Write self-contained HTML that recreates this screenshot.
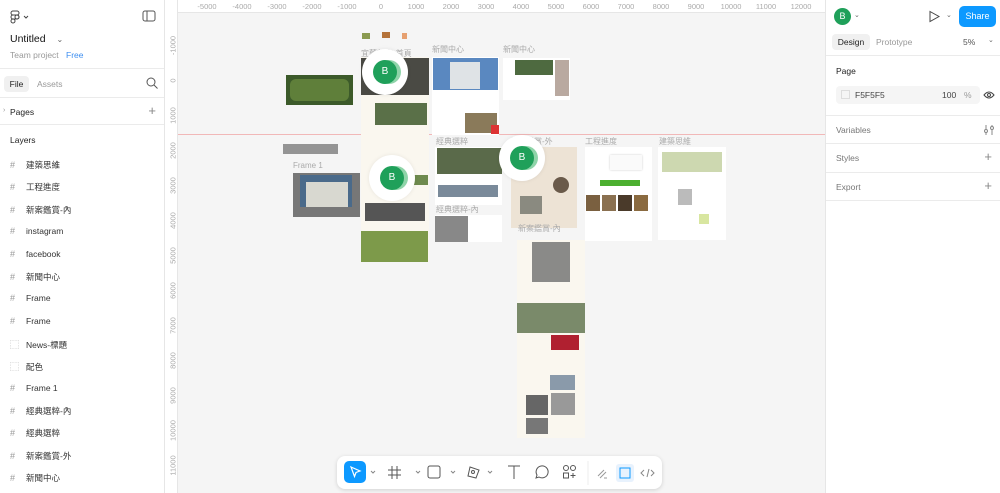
<!DOCTYPE html>
<html><head><meta charset="utf-8"><style>
*{box-sizing:border-box;margin:0;padding:0}
body{width:1000px;height:493px;overflow:hidden;background:#f5f5f5;font-family:"Liberation Sans","Noto Sans CJK TC",sans-serif;font-size:9px;color:#222;position:relative}
.a{position:absolute}
.left{left:0;top:0;width:165px;height:493px;background:#fff;border-right:1px solid #e6e6e6}
.right{left:825px;top:0;width:175px;height:493px;background:#fff;border-left:1px solid #e6e6e6}
.hr{position:absolute;left:0;right:0;height:1px;background:#ebebeb}
.layer{position:absolute;left:10px;font-size:8.5px;color:#333}
.layer b{font-weight:normal;color:#999;display:inline-block;width:16px;font-size:9px}
.rt{font-size:7.5px;color:#aaa;position:absolute;top:2px;transform:translateX(-50%)}
.rl{font-size:7.5px;color:#aaa;position:absolute;left:167px;transform:rotate(-90deg);transform-origin:center;width:30px;text-align:center;margin-left:-9px}
.lbl{position:absolute;font-size:8px;color:#aaa}
.fr{position:absolute;background:#faf7ef}
.av{position:absolute;width:46px;height:46px;border-radius:50%;background:#fff;box-shadow:0 0 4px rgba(0,0,0,.08)}
.av i{position:absolute;left:11px;top:11px;width:24px;height:24px;border-radius:50%;background:#1fa05a;color:#fff;font-style:normal;font-size:10px;text-align:center;line-height:24px;box-shadow:4px 0 0 #8fd4a9}
.sec{position:absolute;left:10px;font-size:8.5px;color:#777}
.plus{position:absolute;right:8px;font-size:13px;color:#888;font-weight:300}
</style></head><body>

<!-- rulers -->
<div class="a" style="left:165px;top:0;width:660px;height:13px;background:#fff;border-bottom:1px solid #e6e6e6"></div>
<div class="a" style="left:165px;top:0;width:13px;height:493px;background:#fff;border-right:1px solid #e6e6e6"></div>
<div class="rt" style="left:207px">-5000</div><div class="rt" style="left:242px">-4000</div><div class="rt" style="left:277px">-3000</div><div class="rt" style="left:312px">-2000</div><div class="rt" style="left:347px">-1000</div><div class="rt" style="left:381px">0</div><div class="rt" style="left:416px">1000</div><div class="rt" style="left:451px">2000</div><div class="rt" style="left:486px">3000</div><div class="rt" style="left:521px">4000</div><div class="rt" style="left:556px">5000</div><div class="rt" style="left:591px">6000</div><div class="rt" style="left:626px">7000</div><div class="rt" style="left:661px">8000</div><div class="rt" style="left:696px">9000</div><div class="rt" style="left:731px">10000</div><div class="rt" style="left:766px">11000</div><div class="rt" style="left:801px">12000</div>
<div class="rl" style="top:41px">-1000</div><div class="rl" style="top:76px">0</div><div class="rl" style="top:111px">1000</div><div class="rl" style="top:146px">2000</div><div class="rl" style="top:181px">3000</div><div class="rl" style="top:216px">4000</div><div class="rl" style="top:251px">5000</div><div class="rl" style="top:286px">6000</div><div class="rl" style="top:321px">7000</div><div class="rl" style="top:356px">8000</div><div class="rl" style="top:391px">9000</div><div class="rl" style="top:426px">10000</div><div class="rl" style="top:461px">11000</div>
<div class="a" style="left:178px;top:134px;width:647px;height:1px;background:#f1b8b8"></div>

<!-- canvas content -->
<div class="a" style="left:362px;top:33px;width:8px;height:6px;background:#8a9a50"></div>
<div class="a" style="left:382px;top:32px;width:8px;height:6px;background:#b5733a"></div>
<div class="a" style="left:402px;top:33px;width:5px;height:6px;background:#e6a070"></div>
<div class="a" style="left:286px;top:75px;width:67px;height:30px;background:#3c5a2a"></div>
<div class="a" style="left:290px;top:79px;width:59px;height:22px;background:#5f7f3a;border-radius:6px"></div>
<div class="lbl" style="left:361px;top:48px">宜蘭新案-首頁</div>
<div class="fr" style="left:361px;top:57px;width:68px;height:205px"></div>
<div class="a" style="left:361px;top:58px;width:68px;height:37px;background:#4a4a44"></div>
<div class="a" style="left:375px;top:103px;width:52px;height:22px;background:#5a7048"></div>
<div class="a" style="left:361px;top:231px;width:67px;height:31px;background:#7d9a4a"></div>
<div class="a" style="left:365px;top:203px;width:60px;height:18px;background:#555"></div>
<div class="a" style="left:395px;top:175px;width:33px;height:10px;background:#6e8a4e"></div>
<div class="lbl" style="left:432px;top:44px">新聞中心</div>
<div class="fr" style="left:432px;top:57px;width:67px;height:78px;background:#fff"></div>
<div class="a" style="left:433px;top:58px;width:65px;height:32px;background:#5a88c0"></div>
<div class="a" style="left:450px;top:62px;width:30px;height:27px;background:#dfe3e6"></div>
<div class="a" style="left:465px;top:113px;width:32px;height:20px;background:#8a7a5a"></div>
<div class="a" style="left:491px;top:125px;width:8px;height:9px;background:#d33"></div>
<div class="lbl" style="left:503px;top:44px">新聞中心</div>
<div class="fr" style="left:503px;top:58px;width:67px;height:42px;background:#fff"></div>
<div class="a" style="left:515px;top:60px;width:38px;height:15px;background:#4e6a40"></div>
<div class="a" style="left:555px;top:60px;width:14px;height:36px;background:#8a7060;opacity:.6"></div>
<div class="a" style="left:283px;top:144px;width:55px;height:10px;background:#333;opacity:.5"></div>
<div class="lbl" style="left:293px;top:161px">Frame 1</div>
<div class="a" style="left:293px;top:173px;width:67px;height:44px;background:#777"></div>
<div class="a" style="left:300px;top:175px;width:52px;height:32px;background:#4a6a8a"></div>
<div class="a" style="left:306px;top:182px;width:42px;height:25px;background:#d8d8d0"></div>
<div class="lbl" style="left:436px;top:136px">經典選粹</div>
<div class="fr" style="left:435px;top:147px;width:67px;height:58px;background:#fff"></div>
<div class="a" style="left:437px;top:148px;width:65px;height:26px;background:#5a6a4a"></div>
<div class="a" style="left:438px;top:185px;width:60px;height:12px;background:#7a8a9a"></div>
<div class="lbl" style="left:436px;top:204px">經典選粹-內</div>
<div class="fr" style="left:435px;top:215px;width:67px;height:27px;background:#fff"></div>
<div class="a" style="left:435px;top:216px;width:33px;height:26px;background:#888"></div>
<div class="lbl" style="left:510px;top:136px">新案鑑賞-外</div>
<div class="fr" style="left:511px;top:147px;width:66px;height:81px;background:#ede3d5"></div>
<div class="a" style="left:553px;top:177px;width:16px;height:16px;border-radius:50%;background:#6a5a4a"></div>
<div class="a" style="left:520px;top:196px;width:22px;height:18px;background:#8a8a80"></div>
<div class="lbl" style="left:585px;top:136px">工程進度</div>
<div class="fr" style="left:585px;top:147px;width:67px;height:94px;background:#fff"></div>
<div class="a" style="left:610px;top:155px;width:32px;height:15px;background:#fafafa;box-shadow:0 0 2px #ccc"></div>
<div class="a" style="left:600px;top:180px;width:40px;height:6px;background:#4caf30"></div>
<div class="a" style="left:586px;top:195px;width:14px;height:16px;background:#7a6040"></div><div class="a" style="left:602px;top:195px;width:14px;height:16px;background:#8a7050"></div><div class="a" style="left:618px;top:195px;width:14px;height:16px;background:#4a3a2a"></div><div class="a" style="left:634px;top:195px;width:14px;height:16px;background:#8a6a40"></div>
<div class="lbl" style="left:659px;top:136px">建築思維</div>
<div class="fr" style="left:658px;top:147px;width:68px;height:93px;background:#fff"></div>
<div class="a" style="left:662px;top:152px;width:60px;height:20px;background:#cdd8b0"></div>
<div class="a" style="left:678px;top:189px;width:14px;height:16px;background:#bbb"></div>
<div class="a" style="left:699px;top:214px;width:10px;height:10px;background:#d8e6a0"></div>
<div class="lbl" style="left:518px;top:223px">新案鑑賞-內</div>
<div class="fr" style="left:517px;top:240px;width:68px;height:198px"></div>
<div class="a" style="left:532px;top:242px;width:38px;height:40px;background:#8a8a88"></div>
<div class="a" style="left:517px;top:303px;width:68px;height:30px;background:#7a8a6a"></div>
<div class="a" style="left:551px;top:335px;width:28px;height:15px;background:#b02030"></div>
<div class="a" style="left:550px;top:375px;width:25px;height:15px;background:#8a9aaa"></div>
<div class="a" style="left:526px;top:395px;width:22px;height:20px;background:#666"></div>
<div class="a" style="left:551px;top:393px;width:24px;height:22px;background:#999"></div>
<div class="a" style="left:526px;top:418px;width:22px;height:16px;background:#777"></div>
<div class="av" style="left:362px;top:49px"><i>B</i></div>
<div class="av" style="left:369px;top:155px"><i>B</i></div>
<div class="av" style="left:499px;top:135px"><i>B</i></div>

<!-- toolbar -->
<div class="a" style="left:337px;top:456px;width:325px;height:33px;background:#fff;border-radius:8px;box-shadow:0 1px 4px rgba(0,0,0,.15)"></div>
<div class="a" style="left:344px;top:461px;width:22px;height:22px;background:#0d99ff;border-radius:5px"></div>
<svg class="a" style="left:344px;top:461px" width="22" height="22"><path d="M7 6l9 4-4 1.5-1.5 4z" fill="none" stroke="#fff" stroke-width="1.2"/></svg>
<svg class="a" style="left:366px;top:456px" width="300" height="33" fill="none" stroke="#555" stroke-width="1">
<path d="M5 15l2 2 2-2M50 15l2 2 2-2M85 15l2 2 2-2M122 15l2 2 2-2" stroke="#888"/>
<path d="M26 10v13M31 10v13M22 14h13M22 19h13"/>
<rect x="62" y="10" width="12" height="12" rx="2"/>
<path d="M104 11l9 3-3 8-8-2z"/><circle cx="107" cy="16" r="1.5"/>
<path d="M142 10h12M148 10v13"/>
<path d="M170 22l1-3a6 6 0 1 1 2 2z"/>
<circle cx="200" cy="12" r="2.5"/><circle cx="207" cy="12" r="2.5"/><rect x="197.5" y="17" width="5" height="5"/><path d="M207 17v5M204.5 19.5h5"/>
<path d="M222 5v24" stroke="#eee"/>
<path d="M232 20l6-6M234 22l6-6M238 22h3" stroke="#999"/>
<rect x="250" y="8" width="18" height="18" rx="3" fill="#e8f2fd" stroke="none"/>
<rect x="254" y="12" width="10" height="10" stroke="#0d99ff"/>
<path d="M278 14l-3 3 3 3M285 14l3 3-3 3M283 13l-2 8" stroke="#888"/>
</svg>
<div class="a" style="left:962px;top:457px;width:24px;height:24px;border-radius:50%;background:#1e1e1e;color:#fff;text-align:center;line-height:24px;font-size:12px">?</div>

<!-- left panel -->
<div class="a left">
<svg class="a" style="left:10px;top:10px" width="20" height="14" fill="none" stroke="#444" stroke-width="1"><rect x="1" y="1" width="8" height="4" rx="2"/><rect x="1" y="5" width="8" height="4" rx="2"/><circle cx="7" cy="7" r="2"/><rect x="1" y="9" width="4" height="4" rx="2"/><path d="M14 6l2 2 2-2"/></svg>
<svg class="a" style="left:142px;top:10px" width="14" height="12" fill="none" stroke="#555"><rect x="1" y="1" width="12" height="10" rx="2"/><path d="M5 1v10"/></svg>
<div class="a" style="left:10px;top:33px;font-size:10.5px;color:#111">Untitled <span style="font-size:8px;color:#666;margin-left:8px">⌄</span></div>
<div class="a" style="left:10px;top:50px;font-size:8.5px;color:#999">Team project <span style="color:#3d8ef0;margin-left:5px">Free</span></div>
<div class="hr" style="top:68px"></div>
<div class="a" style="left:4px;top:76px;width:25px;height:16px;background:#f0f0f0;border-radius:4px;font-size:8.5px;line-height:16px;text-align:center">File</div>
<div class="a" style="left:37px;top:79px;font-size:8.5px;color:#999">Assets</div>
<svg class="a" style="left:146px;top:77px" width="12" height="12" fill="none" stroke="#555"><circle cx="5" cy="5" r="4"/><path d="M8 8l3.5 3.5"/></svg>
<div class="hr" style="top:97px"></div>
<div class="a" style="left:3px;top:107px;font-size:7px;color:#999">›</div>
<div class="a" style="left:10px;top:107px;font-size:8.5px">Pages</div>
<div class="plus" style="top:103px">+</div>
<div class="hr" style="top:124px"></div>
<div class="a" style="left:10px;top:135px;font-size:8.5px">Layers</div>
<div class="layer" style="top:159px"><b>#</b>建築思維</div>
<div class="layer" style="top:181px"><b>#</b>工程進度</div>
<div class="layer" style="top:204px"><b>#</b>新案鑑賞-內</div>
<div class="layer" style="top:226px"><b>#</b>instagram</div>
<div class="layer" style="top:249px"><b>#</b>facebook</div>
<div class="layer" style="top:271px"><b>#</b>新聞中心</div>
<div class="layer" style="top:293px"><b>#</b>Frame</div>
<div class="layer" style="top:316px"><b>#</b>Frame</div>
<div class="layer" style="top:338px"><b>⬚</b>News-標題</div>
<div class="layer" style="top:360px"><b>⬚</b>配色</div>
<div class="layer" style="top:383px"><b>#</b>Frame 1</div>
<div class="layer" style="top:405px"><b>#</b>經典選粹-內</div>
<div class="layer" style="top:427px"><b>#</b>經典選粹</div>
<div class="layer" style="top:450px"><b>#</b>新案鑑賞-外</div>
<div class="layer" style="top:472px"><b>#</b>新聞中心</div>
</div>

<!-- right panel -->
<div class="a right">
<div class="a" style="left:8px;top:8px;width:17px;height:17px;border-radius:50%;background:#1fa05a;color:#fff;font-size:9px;text-align:center;line-height:17px">B</div>
<div class="a" style="left:28px;top:11px;font-size:7px;color:#666">⌄</div>
<svg class="a" style="left:102px;top:10px" width="12" height="13" fill="none" stroke="#444"><path d="M2 1.5l9 5-9 5z"/></svg>
<div class="a" style="left:120px;top:11px;font-size:7px;color:#666">⌄</div>
<div class="a" style="left:133px;top:6px;width:37px;height:21px;background:#0d99ff;border-radius:5px;color:#fff;font-size:9px;text-align:center;line-height:21px">Share</div>
<div class="a" style="left:6px;top:34px;width:38px;height:16px;background:#f0f0f0;border-radius:4px;font-size:8.5px;text-align:center;line-height:16px">Design</div>
<div class="a" style="left:50px;top:37px;font-size:8.5px;color:#999">Prototype</div>
<div class="a" style="left:137px;top:37px;font-size:8.5px;color:#555">5%</div>
<div class="a" style="left:162px;top:36px;font-size:7px;color:#666">⌄</div>
<div class="hr" style="top:55px"></div>
<div class="a" style="left:10px;top:66px;font-size:8.5px">Page</div>
<div class="a" style="left:10px;top:86px;width:144px;height:18px;background:#f5f5f5;border-radius:4px"></div>
<div class="a" style="left:15px;top:90px;width:9px;height:9px;background:#f5f5f5;border:1px solid #ddd"></div>
<div class="a" style="left:29px;top:90px;font-size:8.5px;color:#444">F5F5F5</div>
<div class="a" style="left:116px;top:90px;font-size:8.5px;color:#444">100</div>
<div class="a" style="left:138px;top:90px;font-size:8.5px;color:#999">%</div>
<svg class="a" style="left:157px;top:90px" width="12" height="10" fill="none" stroke="#444"><path d="M1 5q5-6 10 0q-5 6-10 0z"/><circle cx="6" cy="5" r="1.5"/></svg>
<div class="hr" style="top:115px"></div>
<div class="sec" style="top:125px">Variables</div>
<svg class="a" style="left:157px;top:124px" width="12" height="12" fill="none" stroke="#888"><path d="M3 1v10M9 1v10"/><circle cx="3" cy="7" r="1.5" fill="#fff"/><circle cx="9" cy="4" r="1.5" fill="#fff"/></svg>
<div class="hr" style="top:143px"></div>
<div class="sec" style="top:153px">Styles</div><div class="plus" style="top:149px">+</div>
<div class="hr" style="top:172px"></div>
<div class="sec" style="top:182px">Export</div><div class="plus" style="top:178px">+</div>
<div class="hr" style="top:200px"></div>
</div>
</body></html>
